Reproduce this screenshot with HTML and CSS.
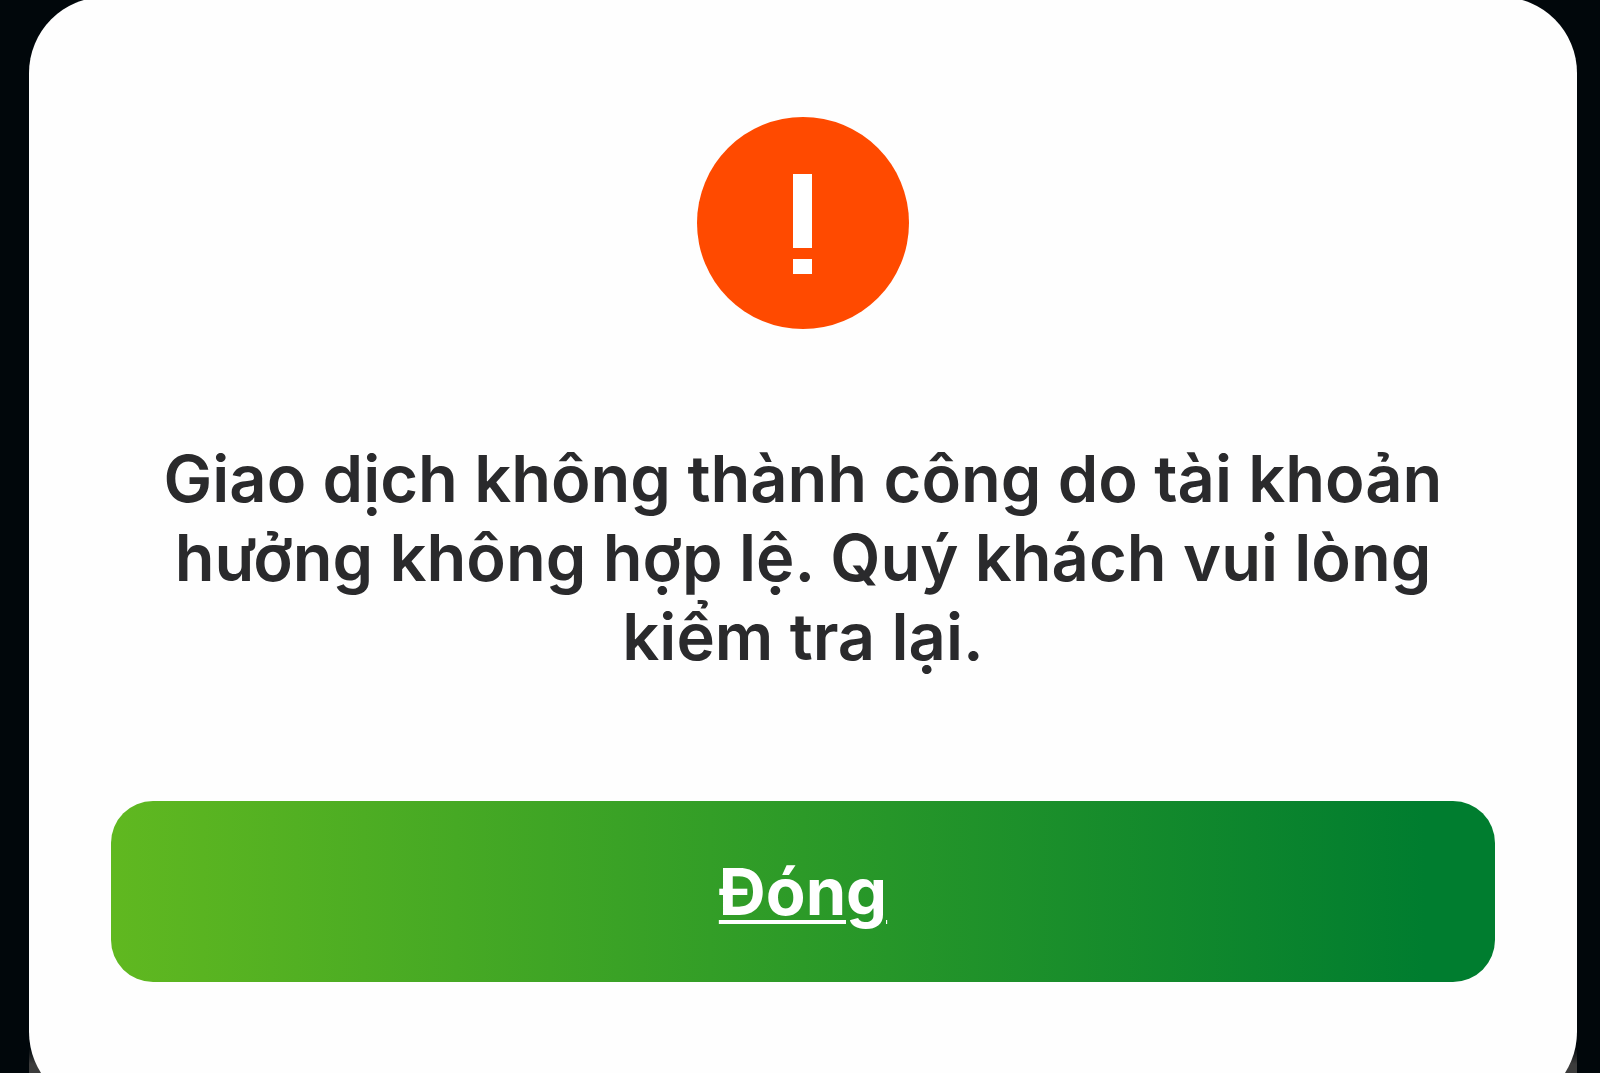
FILE: index.html
```
<!DOCTYPE html>
<html lang="vi">
<head>
    <meta charset="UTF-8">
    <meta name="viewport" content="width=device-width, initial-scale=1.0">
    <title>Thông báo</title>
    <link rel="stylesheet" href="styles.css">
</head>
<body>
    <div class="overlay">
        <div class="sheet">
            <main class="dialog" role="alertdialog" aria-describedby="message">
                <svg class="icon" viewBox="0 0 212 212" aria-hidden="true">
                    <circle cx="106" cy="106" r="106" fill="#ff4a00"/>
                    <rect x="96" y="57" width="19" height="74" fill="#fff"/>
                    <rect x="96" y="142" width="19" height="15" fill="#fff"/>
                </svg>
                <p class="message" id="message">Giao dịch không thành công do tài khoản hưởng không hợp lệ. Quý khách vui lòng kiểm tra lại.</p>
                <button type="button" class="btn">Đóng</button>
            </main>
        </div>
    </div>
</body>
</html>
```
FILE: styles.css
```
* {
    box-sizing: border-box;
}

body {
    background-color: #01070b;
    font-family: Inter, Roboto, sans-serif;
    margin: 0;
}

.overlay {
    height: 100vh;
    overflow: hidden;
    padding: 0 23px 0 29px;
}

/* grey layer showing under the bottom corners */
.sheet {
    background: linear-gradient(to top, #3c3c3c 44px, transparent 60px);
    margin-top: -3px;
}

.dialog {
    align-items: center;
    background-color: #fefefe;
    border-radius: 76px;
    display: flex;
    flex-direction: column;
    padding: 120px 82px 126px;
}

.icon {
    height: 212px;
    width: 212px;
}

.message {
    color: #2a2a2c;
    font-size: 65px;
    font-weight: 600;
    line-height: 79px;
    margin: 110px 0 125px;
    max-width: 1300px;
    text-align: center;
}

.btn {
    background: linear-gradient(to right, #60b820, #2c9a28 50%, #007d2f 95%);
    border: none;
    border-radius: 42px;
    color: #fff;
    cursor: pointer;
    font-family: inherit;
    font-size: 65px;
    font-weight: 700;
    height: 181px;
    text-decoration: underline;
    text-decoration-thickness: 4px;
    text-underline-offset: 5px;
    width: 100%;
}

.btn:hover {
    opacity: 0.9;
}
```
